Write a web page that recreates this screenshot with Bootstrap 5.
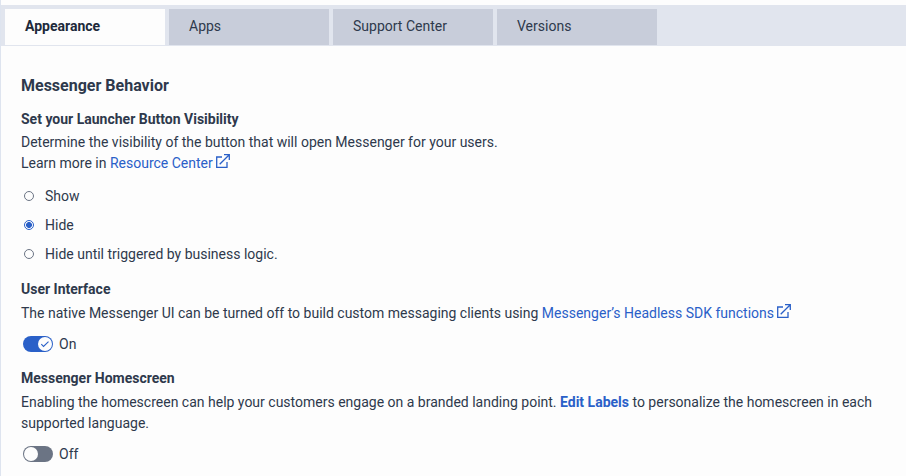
<!DOCTYPE html>
<html lang="en">
<head>
<meta charset="utf-8">
<meta name="viewport" content="width=device-width, initial-scale=1">
<title>Messenger Appearance</title>
<link href="https://cdn.jsdelivr.net/npm/bootstrap@5.3.0/dist/css/bootstrap.min.css" rel="stylesheet">
<style>
body{font-family:Roboto,sans-serif;font-size:14px;line-height:21px;color:#2e394c;background:#fdfdfd;height:100vh;overflow:hidden}
.panel{border-left:1px solid #dee4ef}
.tabbar{margin-top:5px;height:41px;background:#e1e5ee;padding:4px 4px 1px;gap:4px}
.tabbar .nav-link{width:160px;height:36px;padding:7px 20px;line-height:21px;color:#2e394c;background:#c8cdda;border-radius:0}
.tabbar .nav-link.active{background:#fdfdfd;color:#20293a;font-weight:700}
.content{padding:29px 20px 0}
h1{font-size:16px;line-height:21px;font-weight:700}
h2{font-size:14px;line-height:21px;font-weight:700}
.setting p{margin:3px 0 0}
.visibility{margin-top:13px}
.visibility p{margin-top:2px}
.interface{margin-top:14px}
.homescreen{margin-top:13px}
.options{margin-top:12px}
.lnk{color:#2a60c8}
.ext{width:14px;height:14px;vertical-align:0}
.opt{height:21px;gap:11px}
.opt .form-check-input{width:10px;height:10px;margin:0 0 1px 3px;border:1px solid #6b7484;background-color:#fdfdfd;box-shadow:none;flex:none}
.opt .form-check-input:checked{border-color:#2a60c8;background-image:radial-gradient(circle,#2a60c8 2.6px,#fdfdfd 3.3px)}
.switch-row{height:21px;gap:6px;padding-left:2px;margin-top:10px}
.switch-row svg{margin-bottom:1px}
</style>
<script src="https://cdn.jsdelivr.net/npm/bootstrap@5.3.0/dist/js/bootstrap.bundle.min.js"></script>
</head>
<body>
<svg class="d-none"><symbol id="external" viewBox="0 0 14 14"><path d="M6 3H.7v10.3H11V8M3.7 10.3 13 1M8 .7h5.3V6" fill="none" stroke="currentColor" stroke-width="1.3"/></symbol></svg>
<div class="panel d-flex flex-column vh-100">
<nav class="tabbar nav flex-nowrap flex-shrink-0">
<a class="nav-link active" href="#">Appearance</a>
<a class="nav-link" href="#">Apps</a>
<a class="nav-link" href="#">Support Center</a>
<a class="nav-link" href="#">Versions</a>
</nav>
<main class="content">
<h1 class="mb-0">Messenger Behavior</h1>
<section class="setting visibility">
<h2 class="mb-0">Set your Launcher Button Visibility</h2>
<p>Determine the visibility of the button that will open Messenger for your users.<br>Learn more in <a class="lnk text-decoration-none" href="#">Resource Center <svg class="ext"><use href="#external"/></svg></a></p>
<div class="options d-flex flex-column gap-2">
<label class="opt d-flex align-items-center"><input class="form-check-input" type="radio" name="vis">Show</label>
<label class="opt d-flex align-items-center"><input class="form-check-input" type="radio" name="vis" checked>Hide</label>
<label class="opt d-flex align-items-center"><input class="form-check-input" type="radio" name="vis">Hide until triggered by business logic.</label>
</div>
</section>
<section class="setting interface">
<h2 class="mb-0">User Interface</h2>
<p>The native Messenger UI can be turned off to build custom messaging clients using <a class="lnk text-decoration-none" href="#">Messenger’s Headless SDK functions <svg class="ext"><use href="#external"/></svg></a></p>
<div class="switch-row d-flex align-items-center"><svg width="30" height="16"><rect width="30" height="16" rx="8" fill="#2a60c8"/><circle cx="22" cy="8" r="7" fill="#fdfdfd"/><path d="m18.3 8.2 2.2 2.2 5-4.8" fill="none" stroke="#2a60c8" stroke-width="1.1"/></svg>On</div>
</section>
<section class="setting homescreen">
<h2 class="mb-0">Messenger Homescreen</h2>
<p>Enabling the homescreen can help your customers engage on a branded landing point. <a class="lnk text-decoration-none fw-bold" href="#">Edit Labels</a> to personalize the homescreen in each supported language.</p>
<div class="switch-row d-flex align-items-center"><svg width="30" height="16"><rect width="30" height="16" rx="8" fill="#6b7484"/><circle cx="8" cy="8" r="7" fill="#fdfdfd"/></svg>Off</div>
</section>
</main>
</div>
</body>
</html>
